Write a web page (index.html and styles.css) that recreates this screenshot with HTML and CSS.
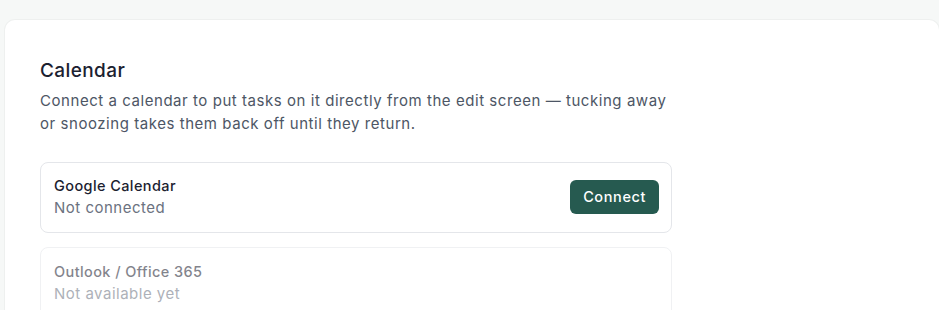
FILE: index.html
```html
<!DOCTYPE html>
<html lang="en">
<head>
    <meta charset="UTF-8">
    <meta name="viewport" content="width=device-width, initial-scale=1.0">
    <title>Settings - Calendar</title>
    <link rel="stylesheet" href="styles.css">
</head>
<body>
    <div class="panel">
        <section class="section">
            <h2>Calendar</h2>
            <p class="lead">Connect a calendar to put tasks on it directly from the edit screen — tucking away or snoozing takes them back off until they return.</p>

            <div class="provider">
                <div class="provider-info">
                    <div class="provider-name">Google Calendar</div>
                    <div class="provider-status">Not connected</div>
                </div>
                <button class="btn-connect">Connect</button>
            </div>

            <div class="provider disabled">
                <div class="provider-info">
                    <div class="provider-name">Outlook / Office 365</div>
                    <div class="provider-status">Not available yet</div>
                </div>
            </div>
        </section>
    </div>
</body>
</html>
```

FILE: styles.css
```css
body {
    margin: 0;
    padding: 20px 0 0 5px;
    font-family: Inter, sans-serif;
    background-color: #f6f8f7;
    color: #1b2130;
    overflow: hidden;
}
.panel {
    background: #ffffff;
    border-radius: 10px;
    box-shadow: 0 0 0 1px rgba(0, 0, 0, 0.03);
    padding: 39px 35px 40px;
    min-height: 400px;
}
.section {
    width: 632px;
}
.section h2 {
    margin: 0;
    font-size: 19px;
    font-weight: 500;
    line-height: 24px;
    letter-spacing: 0.4px;
    color: #1b2130;
}
.lead {
    margin: 6px 0 27px;
    font-size: 15px;
    line-height: 23px;
    letter-spacing: 0.55px;
    color: #4d5665;
}
.provider {
    display: flex;
    align-items: center;
    justify-content: space-between;
    border: 1px solid #e4e6ea;
    border-radius: 8px;
    padding: 12px 12px 13px 13px;
    margin-bottom: 14px;
}
.provider-name {
    font-size: 14.5px;
    font-weight: 500;
    line-height: 22px;
    letter-spacing: 0.4px;
    color: #1b2130;
}
.provider-status {
    font-size: 15px;
    line-height: 22px;
    letter-spacing: 0.5px;
    color: #6b7280;
}
.btn-connect {
    padding: 8px 13px;
    border: none;
    border-radius: 6px;
    background-color: #265a50;
    color: #ffffff;
    font-family: inherit;
    font-size: 14.5px;
    font-weight: 500;
    line-height: 18px;
    letter-spacing: 0.6px;
    cursor: pointer;
}
.disabled {
    padding-top: 13px;
    opacity: 0.55;
}
```
